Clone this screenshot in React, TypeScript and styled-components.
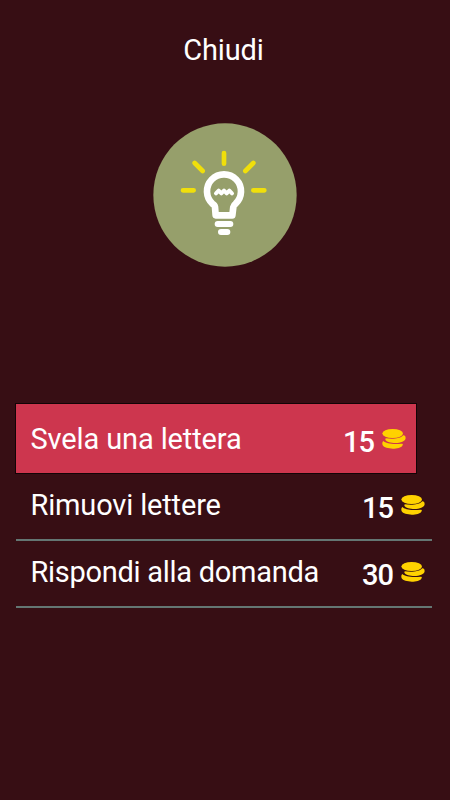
import React from 'react';
import styled, { createGlobalStyle } from 'styled-components';

const GlobalStyle = createGlobalStyle`
  * { box-sizing: border-box; }
  body { margin: 0; background: #370e14; }
`;

const Screen = styled.main`
  display: flex;
  flex-direction: column;
  width: 450px;
  height: 800px;
  overflow: hidden;
  background: #370e14;
  color: #fff;
  font-family: Roboto, 'Liberation Sans', sans-serif;
`;

const CloseButton = styled.button`
  align-self: center;
  height: 36px;
  margin: 32px 3px 0 0;
  padding: 0;
  border: 0;
  background: none;
  color: inherit;
  font: 400 29px/36px Roboto, 'Liberation Sans', sans-serif;
  letter-spacing: -0.15px;
`;

const BulbBadge = styled.svg`
  align-self: center;
  flex: none;
  width: 144px;
  height: 144px;
  margin-top: 55px;
`;

const HintList = styled.ul`
  margin: 137px 18px 0 16px;
  padding: 0;
  list-style: none;
`;

const HintRow = styled.li<{ $active?: boolean }>`
  display: flex;
  align-items: flex-start;
  justify-content: space-between;
  width: ${({ $active }) => ($active ? 400 : 416)}px;
  height: ${({ $active }) => ($active ? 69 : 68)}px;
  padding: ${({ $active }) => ($active ? '17px 10px 0 14.5px' : '14px 7px 0 14.5px')};
  background: ${({ $active }) => ($active ? '#cd364e' : 'transparent')};
  box-shadow: ${({ $active }) => ($active ? '0 0 0 1px #120406' : 'none')};
  border-bottom: ${({ $active }) => ($active ? '0' : '2px solid #647673')};

  &:last-child {
    height: 67px;
    padding-top: 13px;
  }
`;

const Label = styled.span<{ $spacing: number }>`
  font-size: 29px;
  line-height: 36px;
  letter-spacing: ${({ $spacing }) => $spacing}px;
  white-space: nowrap;
`;

const Price = styled.span`
  display: flex;
  align-items: flex-start;
  gap: 8px;
  padding-top: 3px;
  font-size: 29px;
  font-weight: 500;
  line-height: 36px;
  letter-spacing: -1px;
`;

const CoinIcon = styled.svg`
  width: 24px;
  height: 20px;
  margin-top: 5px;
`;

const Coins = () => (
  <CoinIcon viewBox="0 0 72 60" fill="#ffd200">
    <path d="M4 36C12 44 34 47 59 44Q65 43 61 50C54 62 9 62 2 49Q-1 40 4 36Z" />
    <path d="M11 28C32 31 56 29 64 19Q71 18 71 27C70 46 19 46 10 32Z" />
    <ellipse cx="32" cy="13.5" rx="31" ry="13.5" />
  </CoinIcon>
);

const hints = [
  { label: 'Svela una lettera', price: 15, spacing: -0.13, active: true },
  { label: 'Rimuovi lettere', price: 15, spacing: -0.16 },
  { label: 'Rispondi alla domanda', price: 30, spacing: -0.28 },
];

export default function App() {
  return (
    <Screen>
      <GlobalStyle />
      <CloseButton>Chiudi</CloseButton>
      <BulbBadge viewBox="24 24 432 432" fill="none" strokeLinecap="round" strokeLinejoin="round">
        <circle cx="240" cy="240" r="215" fill="#969f6b" />
        <path
          d="M237 114V146M149 144L173 168M325 144L301 168M114 226H146M325 226H358"
          stroke="#f0df0b"
          strokeWidth="14"
        />
        <path
          d="M212 301H262L265 276Q266 270 271 267A51 51 0 1 0 203 267Q209 270 210 276Z"
          stroke="#fff"
          strokeWidth="20"
        />
        <path d="M218 327H256M228 351H247" stroke="#fff" strokeWidth="18" />
        <path d="M213 235L221 227L229 235L237 227L245 235L253 227L261 235" stroke="#fff" strokeWidth="12" />
      </BulbBadge>
      <HintList>
        {hints.map(({ label, price, spacing, active }) => (
          <HintRow key={label} $active={active}>
            <Label $spacing={spacing}>{label}</Label>
            <Price>
              {price}
              <Coins />
            </Price>
          </HintRow>
        ))}
      </HintList>
    </Screen>
  );
}
